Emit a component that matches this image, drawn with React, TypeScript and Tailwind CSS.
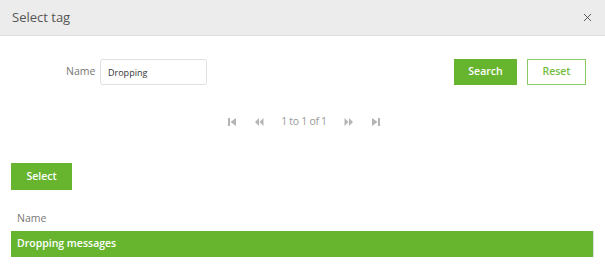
import { X } from "lucide-react";

function PagerIcon({ kind }: { kind: "first" | "prev" | "next" | "last" }) {
  // little media-style arrows used by the grid pager
  const flip = kind === "next" || kind === "last";
  return (
    <svg width="10" height="10" viewBox="0 0 10 10" className={flip ? "-scale-x-100" : ""}>
      {kind === "first" || kind === "last" ? (
        <>
          <rect x="1" y="1" width="2" height="8" fill="#b5b5b5" />
          <path d="M9 1 L3.5 5 L9 9 Z" fill="#b5b5b5" />
        </>
      ) : (
        <>
          <path d="M5 1 L1 5 L5 9 Z" fill="#b5b5b5" />
          <path d="M9.5 1 L5.5 5 L9.5 9 Z" fill="#b5b5b5" />
        </>
      )}
    </svg>
  );
}

export default function App() {
  return (
    <div
      className="w-[605px] h-[264px] bg-white overflow-hidden"
      style={{ fontFamily: '"Open Sans", "Noto Sans", sans-serif' }}
    >
      <div className="flex h-[36px] items-center justify-between border-b border-[#dcdcdc] bg-[#ececec] pl-[12px] pr-[11px]">
        <span className="text-[13px] text-[#555]">Select tag</span>
        <X size={13} strokeWidth={1.6} className="text-[#444]" />
      </div>

      <div className="mt-[23px] flex items-center pl-[66px] pr-[19px]">
        <span className="w-[34px] text-[10.5px] text-[#777]">Name</span>
        <input
          className="h-[26px] w-[107px] rounded-[3px] border border-[#e0e0e0] px-[7px] text-[9px] text-[#333] outline-none"
          defaultValue="Dropping"
        />
        <div className="ml-auto flex gap-[10px]">
          <button className="h-[26px] w-[63px] bg-[#67b52f] text-[10.5px] font-semibold text-white">
            Search
          </button>
          <button className="h-[26px] w-[59px] border border-[#8ccb63] bg-white text-[10.5px] font-semibold text-[#74bd44]">
            Reset
          </button>
        </div>
      </div>

      <div className="mt-[29px] flex items-center justify-center gap-[17px] pl-[3px] text-[10.5px] text-[#9a9a9a]">
        <PagerIcon kind="first" />
        <PagerIcon kind="prev" />
        <span className="tracking-[-0.3px]">1 to 1 of 1</span>
        <PagerIcon kind="next" />
        <PagerIcon kind="last" />
      </div>

      <div className="mt-[32px] px-[11px]">
        <button className="h-[27px] w-[61px] bg-[#67b52f] text-[10.5px] font-semibold text-white">
          Select
        </button>
        <div className="mt-[21px] px-[6px] text-[10.5px] text-[#777]">Name</div>
        <div className="mt-[4px] flex h-[26px] w-[583px] items-center border-r border-[#dcdcdc] bg-[#67b52f] px-[6px] text-[10.5px] font-semibold text-white">
          Dropping messages
        </div>
      </div>
    </div>
  );
}
